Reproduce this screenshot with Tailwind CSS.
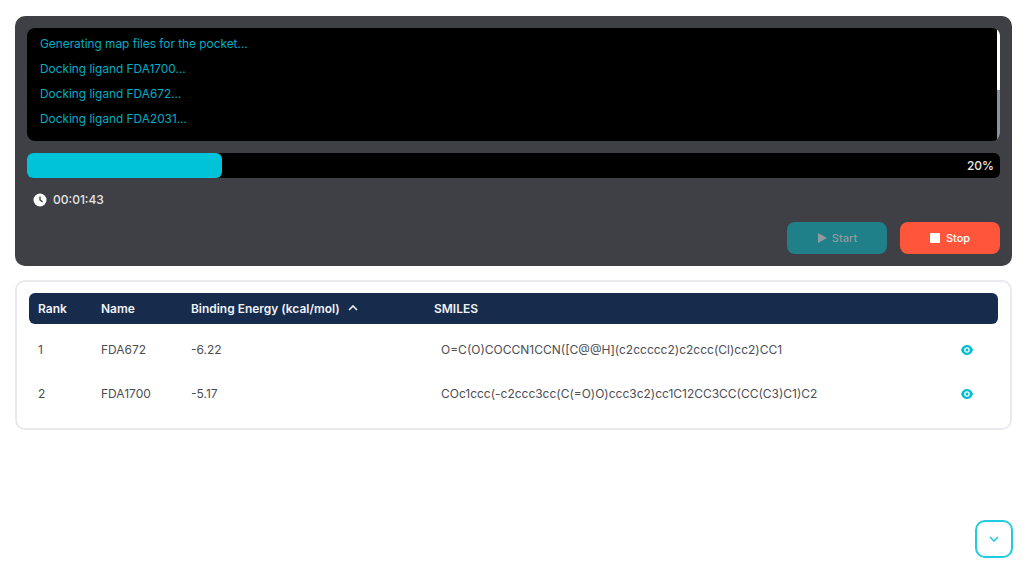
<!DOCTYPE html>
<html>
  <head>
    <meta charset="UTF-8" />
    <title>Docking</title>
    <script src="https://cdn.jsdelivr.net/npm/@tailwindcss/browser@4"></script>
  </head>

  <body class="w-full h-[565px] overflow-hidden bg-white font-['Inter',sans-serif]">
    <div class="px-[15px] pt-[16px] flex flex-col gap-[14px]">
      <!-- docking panel -->
      <div class="h-[250px] rounded-[10px] bg-[#3f4045] p-[12px] flex flex-col">
        <!-- log -->
        <div class="h-[113px] shrink-0 rounded-[8px] bg-black pl-[13px] pt-[4px] relative overflow-hidden text-[11.85px] text-[#00adc4]">
          <p class="h-[25px] leading-[25px]">Generating map files for the pocket...</p>
          <p class="h-[25px] leading-[25px]">Docking ligand FDA1700...</p>
          <p class="h-[25px] leading-[25px]">Docking ligand FDA672...</p>
          <p class="h-[25px] leading-[25px]">Docking ligand FDA2031...</p>
          <div class="absolute top-0 right-0 bottom-0 w-[3px] bg-[#8b93a1]">
            <div class="h-[62px] bg-white"></div>
          </div>
        </div>

        <!-- progress -->
        <div class="mt-[12px] h-[25px] shrink-0 rounded-[6px] bg-black relative flex items-center justify-end pr-[6px]">
          <div class="absolute left-0 top-0 bottom-0 w-[195px] rounded-[6px] bg-[#00c2d8]"></div>
          <span class="text-[12px] font-medium text-[#e8e8e8]">20%</span>
        </div>

        <!-- timer -->
        <div class="mt-[15px] h-[14px] shrink-0 pl-[6px] flex items-center gap-[6px] text-[12px] font-medium text-[#e4e4e4]">
          <svg class="size-[14px]" viewBox="0 0 14 14">
            <circle cx="7" cy="7" r="6.5" fill="#fff" />
            <path d="M7 3.5V7l2.6 1.8" fill="none" stroke="#3f4045" stroke-width="1.4" />
          </svg>
          <span>00:01:43</span>
        </div>

        <!-- buttons -->
        <div class="mt-[15px] shrink-0 flex justify-end gap-[13px] text-[11px] font-medium">
          <button class="w-[100px] h-[32px] rounded-[8px] bg-[#1f8089] text-[#8f9a9e] flex items-center justify-center gap-[5px]">
            <svg class="size-[10px]" viewBox="0 0 10 10"><path d="M1 0l9 5-9 5z" fill="#8f9a9e" /></svg>
            Start
          </button>
          <button class="w-[100px] h-[32px] rounded-[8px] bg-[#ff563b] text-white flex items-center justify-center gap-[6px]">
            <span class="size-[10px] rounded-[1px] bg-white"></span>
            Stop
          </button>
        </div>
      </div>

      <!-- results -->
      <div class="h-[150px] rounded-[10px] border-2 border-[#e8eaee] px-[12px] pt-[11px] text-[12px] text-[#4b4d53]">
        <div class="h-[31px] rounded-[6px] bg-[#172c4d] flex items-center pl-[9px] font-semibold text-[#f0f2f5]">
          <span class="w-[63px]">Rank</span>
          <span class="w-[90px]">Name</span>
          <span class="w-[243px] flex items-center gap-[8px] text-[11.95px]">
            Binding Energy (kcal/mol)
            <svg class="w-[10px] h-[6px]" viewBox="0 0 10 6"><path d="M1 5l4-4 4 4" fill="none" stroke="#f0f2f5" stroke-width="1.6" /></svg>
          </span>
          <span>SMILES</span>
        </div>

        <div class="h-[44px] mt-[4px] flex items-center pl-[9px]">
          <span class="w-[63px]">1</span>
          <span class="w-[90px]">FDA672</span>
          <span class="w-[250px]">-6.22</span>
          <span class="w-[519px]">O=C(O)COCCN1CCN([C@@H](c2ccccc2)c2ccc(Cl)cc2)CC1</span>
          <svg class="size-[14px]" viewBox="0 0 14 14">
            <path d="M1 7C2.200 3.600 4.400 2 7 2S11.800 3.600 13 7C11.800 10.400 9.600 12 7 12S2.200 10.400 1 7z" fill="#00bcd4" />
            <circle cx="7" cy="7" r="2.800" fill="#fff" />
            <circle cx="7" cy="7" r="1.500" fill="#00bcd4" />
          </svg>
        </div>
        <div class="h-[44px] flex items-center pl-[9px]">
          <span class="w-[63px]">2</span>
          <span class="w-[90px]">FDA1700</span>
          <span class="w-[250px]">-5.17</span>
          <span class="w-[519px] text-[11.97px]">COc1ccc(-c2ccc3cc(C(=O)O)ccc3c2)cc1C12CC3CC(CC(C3)C1)C2</span>
          <svg class="size-[14px]" viewBox="0 0 14 14">
            <path d="M1 7C2.200 3.600 4.400 2 7 2S11.800 3.600 13 7C11.800 10.400 9.600 12 7 12S2.200 10.400 1 7z" fill="#00bcd4" />
            <circle cx="7" cy="7" r="2.800" fill="#fff" />
            <circle cx="7" cy="7" r="1.500" fill="#00bcd4" />
          </svg>
        </div>
      </div>
    </div>

    <!-- scroll to bottom -->
    <button class="fixed left-[975px] top-[520px] size-[38px] rounded-[10px] border-2 border-[#22cbdf] bg-white flex items-center justify-center">
      <svg class="w-[10px] h-[6px]" viewBox="0 0 10 6"><path d="M1 1l4 4 4-4" fill="none" stroke="#22cbdf" stroke-width="1.6" /></svg>
    </button>
  </body>
</html>
